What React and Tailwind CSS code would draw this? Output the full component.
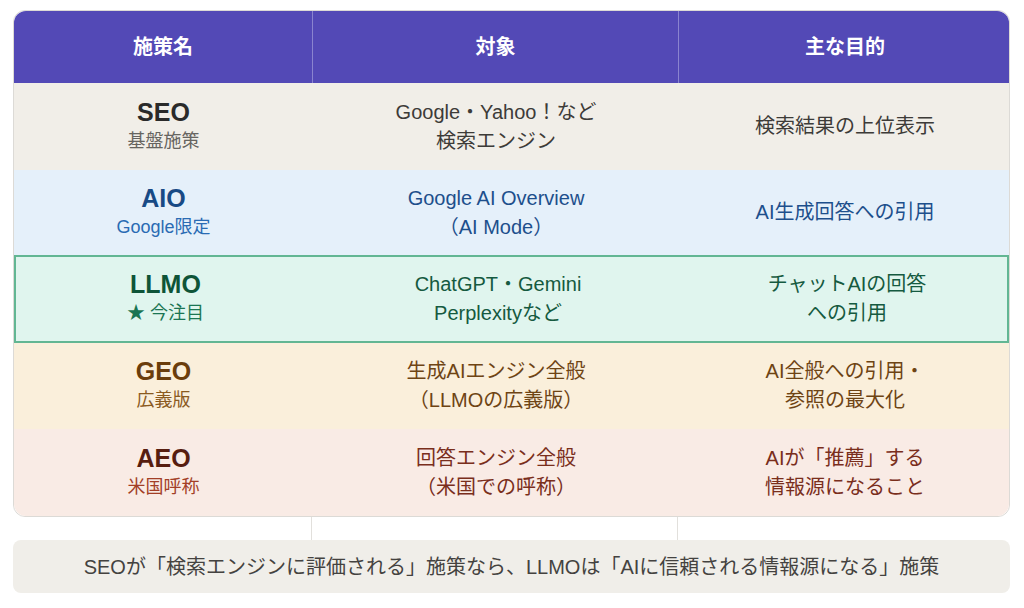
const rows = [
  {
    key: "seo",
    name: "SEO",
    sub: "基盤施策",
    target: ["Google・Yahoo！など", "検索エンジン"],
    goal: ["検索結果の上位表示"],
    bg: "bg-[#f1eee8]",
    h: "h-[87px]",
    title: "text-[#2a2a2a]",
    subColor: "text-[#666460]",
    text: "text-[#3d3b38]",
  },
  {
    key: "aio",
    name: "AIO",
    sub: "Google限定",
    target: ["Google AI Overview", "（AI Mode）"],
    goal: ["AI生成回答への引用"],
    bg: "bg-[#e5f0fa]",
    h: "h-[85px]",
    title: "text-[#184a85]",
    subColor: "text-[#2a6bb3]",
    text: "text-[#1d4f8c]",
  },
  {
    key: "llmo",
    name: "LLMO",
    sub: "★ 今注目",
    target: ["ChatGPT・Gemini", "Perplexityなど"],
    goal: ["チャットAIの回答", "への引用"],
    bg: "bg-[#e0f5ee] border-2 border-[#62b693]",
    h: "h-[88px]",
    title: "text-[#0e5438]",
    subColor: "text-[#1b7553]",
    text: "text-[#155a40]",
  },
  {
    key: "geo",
    name: "GEO",
    sub: "広義版",
    target: ["生成AIエンジン全般", "（LLMOの広義版）"],
    goal: ["AI全般への引用・", "参照の最大化"],
    bg: "bg-[#faefdb]",
    h: "h-[86px]",
    title: "text-[#6a3d0c]",
    subColor: "text-[#8a5a1f]",
    text: "text-[#6e4414]",
  },
  {
    key: "aeo",
    name: "AEO",
    sub: "米国呼称",
    target: ["回答エンジン全般", "（米国での呼称）"],
    goal: ["AIが「推薦」する", "情報源になること"],
    bg: "bg-[#f9ebe5] rounded-b-xl",
    h: "h-[87px]",
    title: "text-[#571d10]",
    subColor: "text-[#a33f27]",
    text: "text-[#7a2e1c]",
  },
];

const cols = "grid grid-cols-[299px_366px_332px]";

function Lines({ lines, className }) {
  return (
    <div className={`flex flex-col items-center justify-center text-center text-[20px] leading-[29px] ${className}`}>
      {lines.map((l) => (
        <span key={l}>{l}</span>
      ))}
    </div>
  );
}

export default function App() {
  return (
    <div
      className="w-[1024px] h-[608px] bg-white pt-[10px] px-[13px]"
      style={{ fontFamily: '"Liberation Sans", "Noto Sans CJK JP", sans-serif' }}
    >
      {/* Table */}
      <div className="w-[997px] rounded-xl border border-[#dcdad6] bg-white">
        <div className={`${cols} h-[72px] bg-[#5349b6] rounded-t-xl text-white text-[20px] font-bold`}>
          <div className="flex items-center justify-center border-r border-[#8a84cf]">施策名</div>
          <div className="flex items-center justify-center border-r border-[#8a84cf]">対象</div>
          <div className="flex items-center justify-center">主な目的</div>
        </div>

        {rows.map((r) => (
          <div key={r.key} className={`${cols} ${r.h} ${r.bg} box-border`}>
            <div className="flex flex-col items-center justify-center">
              <span className={`text-[25px] leading-[29px] font-bold ${r.title}`}>{r.name}</span>
              <span className={`text-[18px] leading-[29px] ${r.subColor}`}>{r.sub}</span>
            </div>
            <Lines lines={r.target} className={r.text} />
            <Lines lines={r.goal} className={r.text} />
          </div>
        ))}
      </div>

      {/* connector lines */}
      <div className={`${cols} w-[997px] h-[23px]`}>
        <div className="border-r border-[#e2e0dc]" />
        <div className="border-r border-[#e2e0dc]" />
        <div />
      </div>

      {/* Footer note */}
      <div className="w-[997px] h-[53px] rounded-lg bg-[#f0eee9] flex items-center justify-center text-[20px] text-[#444240]">
        SEOが「検索エンジンに評価される」施策なら、LLMOは「AIに信頼される情報源になる」施策
      </div>
    </div>
  );
}
